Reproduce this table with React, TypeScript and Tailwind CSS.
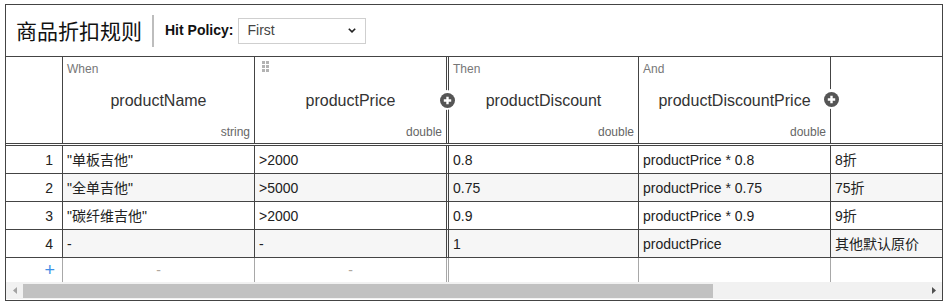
import React from "react";

const FONT = "font-['Liberation_Sans','Noto_Sans_CJK_SC',sans-serif]";

function PlusCircle() {
  return (
    <div className="w-[20px] h-[20px] rounded-full bg-white flex items-center justify-center">
      <svg width="15" height="15" viewBox="0 0 15 15">
        <circle cx="7.5" cy="7.5" r="7.5" fill="#555" />
        <path d="M7.5 3.8v7.4M3.8 7.5h7.4" stroke="#fff" strokeWidth="2.4" />
      </svg>
    </div>
  );
}

function DragHandle() {
  return (
    <svg width="7" height="11" viewBox="0 0 7 11">
      {[0, 4].map((x) =>
        [0, 4, 8].map((y) => (
          <rect key={`${x}-${y}`} x={x} y={y} width="3" height="3" fill="#b3b3b3" />
        ))
      )}
    </svg>
  );
}

type Row = [string, string, string, string, string];
const rows: Row[] = [
  ['"单板吉他"', ">2000", "0.8", "productPrice * 0.8", "8折"],
  ['"全单吉他"', ">5000", "0.75", "productPrice * 0.75", "75折"],
  ['"碳纤维吉他"', ">2000", "0.9", "productPrice * 0.9", "9折"],
  ["-", "-", "1", "productPrice", "其他默认原价"],
];

function HeaderCell({
  label,
  name,
  type,
  handle,
}: {
  label?: string;
  name: string;
  type: string;
  handle?: boolean;
}) {
  return (
    <div className="flex flex-col h-full px-[4px] pt-[5px] pb-[4px]">
      <div className="h-[14px] text-[12px] leading-[14px] text-[#777]">
        {handle ? (
          <div className="pl-[3px] -mt-[1px]">
            <DragHandle />
          </div>
        ) : (
          label
        )}
      </div>
      <div className="flex-1 flex items-center justify-center text-[16px] text-[#333]">
        {name}
      </div>
      <div className="h-[14px] text-[12px] leading-[14px] text-[#666] text-right">{type}</div>
    </div>
  );
}

export default function App() {
  return (
    <div className={`pt-[4px] pl-[5px] bg-white ${FONT}`}>
      <div className="w-[938px] h-[297px] border border-[#444] flex flex-col overflow-hidden bg-white">
        {/* Title bar */}
        <div className="h-[52px] shrink-0 border-b border-[#444] flex items-center pl-[10px]">
          <div className="text-[21px] text-[#111] leading-none pt-[2px]">商品折扣规则</div>
          <div className="ml-[10px] w-[2px] h-[32px] bg-[#bdbdbd]" />
          <div className="ml-[11px] text-[14px] font-bold text-[#111]">Hit Policy:</div>
          <div className="ml-[5px] w-[128px] h-[26px] border border-[#cfcfcf] bg-white flex items-center justify-between pl-[8px] pr-[9px]">
            <span className="text-[14px] text-[#444]">First</span>
            <svg width="8" height="5" viewBox="0 0 8 5">
              <path d="M0.8 0.8L4 3.9L7.2 0.8" stroke="#222" strokeWidth="1.6" fill="none" />
            </svg>
          </div>
        </div>

        {/* Header row */}
        <div className="relative h-[89px] shrink-0 flex border-b-[3px] border-double border-[#444]">
          <div className="w-[57px] border-r border-[#444]" />
          <div className="w-[192px] border-r border-[#444]">
            <HeaderCell label="When" name="productName" type="string" />
          </div>
          <div className="w-[194px] border-r-[3px] border-double border-[#444]">
            <HeaderCell handle name="productPrice" type="double" />
          </div>
          <div className="w-[190px] border-r border-[#444]">
            <HeaderCell label="Then" name="productDiscount" type="double" />
          </div>
          <div className="w-[192px] border-r border-[#444]">
            <HeaderCell label="And" name="productDiscountPrice" type="double" />
          </div>
          <div className="flex-1" />
          <div className="absolute left-[431px] top-[33px]">
            <PlusCircle />
          </div>
          <div className="absolute left-[815px] top-[32px]">
            <PlusCircle />
          </div>
        </div>

        {/* Data rows */}
        {rows.map((r, i) => {
          const bg = i % 2 === 1 ? "bg-[#f6f6f6]" : "bg-white";
          return (
            <div key={i} className="h-[28px] shrink-0 flex border-b border-[#444] text-[14px] text-[#222]">
              <div className="w-[57px] border-r border-[#444] bg-white flex items-center justify-end pr-[9px] pt-[1px]">
                {i + 1}
              </div>
              <div className={`w-[192px] border-r border-[#444] ${bg} flex items-center px-[4px] pt-[1px]`}>{r[0]}</div>
              <div className={`w-[194px] border-r-[3px] border-double border-[#444] ${bg} flex items-center px-[4px] pt-[1px]`}>
                {r[1]}
              </div>
              <div className={`w-[190px] border-r border-[#444] ${bg} flex items-center px-[4px] pt-[1px]`}>{r[2]}</div>
              <div className={`w-[192px] border-r border-[#444] ${bg} flex items-center px-[4px] pt-[1px]`}>{r[3]}</div>
              <div className={`flex-1 ${bg} flex items-center px-[4px] pt-[1px]`}>{r[4]}</div>
            </div>
          );
        })}

        {/* Add row */}
        <div className="h-[24px] shrink-0 flex text-[14px]">
          <div className="w-[57px] border-r border-[#a8a8a8] flex items-center justify-end pr-[7px] text-[18px] leading-none text-[#3d8fe6]">
            +
          </div>
          <div className="w-[192px] border-r border-[#a8a8a8] flex items-center justify-center text-[#b0a89e]">-</div>
          <div className="w-[194px] border-r-[3px] border-double border-[#a8a8a8] flex items-center justify-center text-[#b0a89e]">
            -
          </div>
          <div className="w-[190px] border-r border-[#a8a8a8]" />
          <div className="w-[192px] border-r border-[#a8a8a8]" />
          <div className="flex-1" />
        </div>

        {/* Scrollbar */}
        <div className="h-[17px] shrink-0 bg-[#f1f1f1] flex items-center">
          <div className="w-[17px] h-full flex items-center justify-center">
            <svg width="4" height="7" viewBox="0 0 4 7">
              <path d="M4 0L0 3.5L4 7Z" fill="#a3a3a3" />
            </svg>
          </div>
          <div className="w-[690px] h-[14px] bg-[#c1c1c1]" />
          <div className="flex-1" />
          <div className="w-[17px] h-full flex items-center justify-center">
            <svg width="4" height="7" viewBox="0 0 4 7">
              <path d="M0 0L4 3.5L0 7Z" fill="#505050" />
            </svg>
          </div>
        </div>
      </div>
    </div>
  );
}
